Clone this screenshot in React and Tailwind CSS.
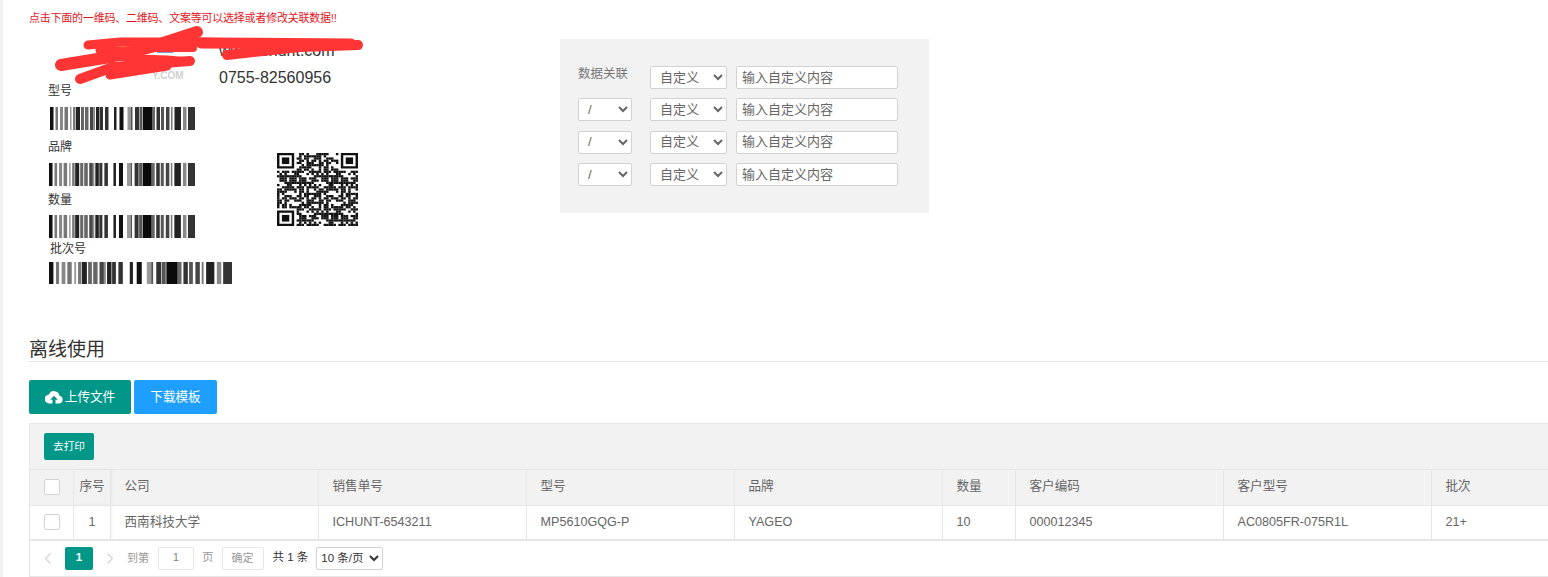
const FONT = { fontFamily: '"Liberation Sans", "Noto Sans CJK SC", sans-serif' }

// bar start, width, colour, read off the reference in px from the left of the code
const BARS = [
  [0, 3.5, '#111'], [5.5, 2.5, '#777'], [10, 3, '#888'], [14.5, 3.5, '#777'], [20, 1.5, '#999'], [23, 2.5, '#777'],
  [26, 4, '#222'], [31, 3, '#666'], [35, 3.5, '#666'], [40, 3.5, '#444'], [43.5, 1.5, '#888'], [46, 3.5, '#222'],
  [50, 3, '#333'], [55, 3.5, '#333'], [64, 2.5, '#222'], [69.5, 4, '#111'], [77.5, 3.5, '#999'], [81, 1.5, '#555'],
  [85, 4, '#333'], [89.5, 3, '#555'], [93, 9, '#0a0a0a'], [102, 3, '#666'], [106.5, 3.5, '#333'], [111, 3, '#555'],
  [116, 3.5, '#444'], [121, 1.5, '#777'], [124.5, 6.5, '#222'], [133, 3.5, '#888'], [138, 7, '#333'],
]

function Barcode({ className }) {
  return (
    <svg viewBox="0 0 145 23" preserveAspectRatio="none" className={`blur-[0.3px] ${className}`}>
      {BARS.map(([x, w, fill]) => (
        <rect key={x} x={x} y="0" width={w} height="23" fill={fill} />
      ))}
    </svg>
  )
}

// finder squares are fixed, the rest of the code is a filler pattern
function QrCode() {
  const size = 33
  const cells = []
  const inFinder = (c, r) => (c < 8 && r < 8) || (c > size - 9 && r < 8) || (c < 8 && r > size - 9)
  for (let r = 0; r < size; r++) {
    for (let c = 0; c < size; c++) {
      if (inFinder(c, r)) continue
      const v = (c * c * 7 + r * r * 13 + c * r * 5 + c * 3 + r * 11) % 17
      if (v % 2 === 0 || v === 7) cells.push(<rect key={c + '-' + r} x={c} y={r} width="1.02" height="1.02" />)
    }
  }
  const finder = (x, y) => (
    <g key={x + '-' + y}>
      <path d={`M${x} ${y}h7v7h-7z M${x + 1} ${y + 1}v5h5v-5z`} fillRule="evenodd" />
      <rect x={x + 2} y={y + 2} width="3" height="3" />
    </g>
  )
  return (
    <svg viewBox="0 0 33 33" preserveAspectRatio="none" className="w-[81px] h-[73px] blur-[0.35px]" fill="#111">
      {cells}
      {finder(0, 0)}
      {finder(26, 0)}
      {finder(0, 26)}
    </svg>
  )
}

function Scribble() {
  return (
    <svg viewBox="0 0 320 70" className="absolute left-[22px] top-[-15px] w-[320px] h-[70px]" fill="none" stroke="#ff3434" strokeLinecap="round" strokeLinejoin="round">
      <path d="M37 21 L69 18 L149 18 L199 19" strokeWidth="9" />
      <path d="M10 41 L59 33 L100 23 L146 8" strokeWidth="12" />
      <path d="M48 26 L85 27" strokeWidth="7" />
      <path d="M105 24 L142 24" strokeWidth="8" />
      <path d="M60 33 L116 35 L139 37" strokeWidth="7" />
      <path d="M29 55 L62 43 L139 37" strokeWidth="10" />
      <path d="M59 51 L116 42" strokeWidth="9" />
      <path d="M176 31 L249 23 L307 21" strokeWidth="10" />
      <path d="M150 19 L300 20" strokeWidth="11" />
    </svg>
  )
}

function Logo() {
  return (
    <div className="relative w-[190px] h-[43px]">
      <span className="absolute left-[88px] top-[7px] w-[14px] h-[5px] bg-[#f0a040]" />
      <span className="absolute left-[128px] top-[9px] w-[16px] h-[5px] bg-[#6f9fd0]" />
      <span className="absolute left-[95px] top-[26px] w-[24px] h-[5px] bg-[#f0a040]" />
      <span className="absolute left-[123px] top-[31px] text-[10px] leading-[12px] font-bold text-[#cfcfcf]">Y.COM</span>
    </div>
  )
}

function Label({ children, className = '' }) {
  return <p className={`h-[16px] text-[12px] leading-[18px] text-[#333] ${className}`}>{children}</p>
}

function PanelSelect({ options, className }) {
  return (
    <select className={`h-[23px] bg-white border border-[#d2d2d2] rounded-[2px] text-[13px] text-[#666] pl-[5px] pb-[1px] ${className}`}>
      {options.map(o => <option key={o}>{o}</option>)}
    </select>
  )
}

function Row({ first }) {
  return (
    <div className="flex items-center h-[23px]">
      {first
        ? <span className="w-[54px] text-[12.5px] text-[#777] -mt-[6px] whitespace-nowrap">数据关联</span>
        : <PanelSelect options={['/']} className="w-[54px]" />}
      <PanelSelect options={['自定义']} className="w-[77px] ml-[18px]" />
      <input placeholder="输入自定义内容" className="w-[162px] h-[23px] ml-[9px] px-[5px] pb-[1px] bg-white border border-[#d2d2d2] rounded-[2px] text-[13px] placeholder:text-[#666]" />
    </div>
  )
}

const COLS = [
  { title: '公司', width: 208, value: '西南科技大学' },
  { title: '销售单号', width: 208, value: 'ICHUNT-6543211' },
  { title: '型号', width: 208, value: 'MP5610GQG-P' },
  { title: '品牌', width: 208, value: 'YAGEO' },
  { title: '数量', width: 73, value: '10' },
  { title: '客户编码', width: 208, value: '000012345' },
  { title: '客户型号', width: 208, value: 'AC0805FR-075R1L' },
  { title: '批次', width: 117, value: '21+' },
]

function Checkbox() {
  return <span className="block w-[16px] h-[16px] mx-auto bg-white border border-[#d2d2d2] rounded-[2px]" />
}

export default function App() {
  return (
    <div className="relative w-[1548px] h-[577px] overflow-hidden bg-white border-l-[3px] border-[#f2f2f2] pl-[26px] text-[#666]" style={FONT}>
      <p className="pt-[11px] text-[11px] leading-[14px] tracking-[-0.02em] text-[#e4161c]">点击下面的一维码、二维码、文案等可以选择或者修改关联数据!!</p>

      {/* 标签预览 + 数据关联 */}
      <div className="flex mt-[14px] h-[298px]">
        <div className="relative w-[531px] shrink-0">
          <div className="flex h-[43px]">
            <Logo />
            <div className="text-[16px] leading-[27px] text-[#333] -mt-[2px]">
              <p>www.ichunt.com</p>
              <p>0755-82560956</p>
            </div>
          </div>
          <div className="flex">
            <div className="pl-[19px] w-[248px]">
              <Label>型号</Label>
              <Barcode className="block ml-[2px] mt-[9px] w-[145px] h-[23px]" />
              <Label className="mt-[8px]">品牌</Label>
              <Barcode className="block ml-[1px] mt-[9px] w-[146px] h-[23px]" />
              <Label className="mt-[5px]">数量</Label>
              <Barcode className="block ml-[1px] mt-[8px] w-[146px] h-[23px]" />
              <Label className="mt-[2px] ml-[2px]">批次号</Label>
              <Barcode className="block ml-[1px] mt-[6px] w-[183px] h-[22px]" />
            </div>
            <div className="mt-[71px]">
              <QrCode />
            </div>
          </div>
          <Scribble />
        </div>

        <div className="w-[369px] h-[174px] bg-[#f2f2f2] pt-[27px] pl-[18px] flex flex-col gap-[9.4px]">
          <Row first />
          <Row />
          <Row />
          <Row />
        </div>
      </div>

      <h2 className="pt-[1px] text-[19px] leading-[23px] text-[#333]">离线使用</h2>
      <div className="border-b border-[#e6e6e6]" />

      <div className="flex gap-[3px] mt-[18px]">
        <button className="flex items-center justify-center w-[102px] h-[34px] bg-[#009688] rounded-[2px] text-[12.6px] text-white">
          <svg viewBox="0 0 24 18" className="w-[18px] h-[14px] mr-[2px]" fill="#fff">
            <path d="M19.4 7.2A7.5 7.5 0 0 0 5.2 5.6 6 6 0 0 0 6 17.6h4v-5H7l5-5.4 5 5.4h-3v5h5a5.3 5.3 0 0 0 .4-10.4z" />
          </svg>
          上传文件
        </button>
        <button className="w-[83px] h-[34px] bg-[#1e9fff] rounded-[2px] text-[12.6px] text-white">下载模板</button>
      </div>

      {/* 表格 */}
      <div className="mt-[9px] border-t border-l border-[#e6e6e6]">
        <div className="h-[46px] bg-[#f2f2f2] pt-[9px] pl-[14px] border-b border-[#e6e6e6]">
          <button className="block w-[50px] h-[27px] bg-[#009688] rounded-[2px] text-[10.7px] text-white">去打印</button>
        </div>
        <table className="table-fixed w-[1518px] text-[12.6px] text-[#666] border-collapse">
          <colgroup>
            <col className="w-[43px]" />
            <col className="w-[37px]" />
            {COLS.map(c => <col key={c.title} style={{ width: c.width }} />)}
          </colgroup>
          <thead>
            <tr className="h-[35px] bg-[#f2f2f2] border-b border-[#e6e6e6]">
              <th className="border-r border-[#e6e6e6] font-normal pl-[1px]"><Checkbox /></th>
              <th className="border-r border-[#e6e6e6] font-normal pl-[1px] pb-[2px] shadow-[2px_0_3px_rgba(0,0,0,0.05)]">序号</th>
              {COLS.map(c => (
                <th key={c.title} className="border-r border-[#e6e6e6] font-normal text-left pl-[14px] pb-[2px]">{c.title}</th>
              ))}
            </tr>
          </thead>
          <tbody>
            <tr className="h-[35px] border-b-2 border-[#e6e6e6]">
              <td className="border-r border-[#e6e6e6] pl-[1px]"><Checkbox /></td>
              <td className="border-r border-[#e6e6e6] pl-[1px] text-center shadow-[2px_0_3px_rgba(0,0,0,0.05)]">1</td>
              {COLS.map(c => (
                <td key={c.title} className="border-r border-[#e6e6e6] pl-[14px]">{c.value}</td>
              ))}
            </tr>
          </tbody>
        </table>
        <div className="flex items-center h-[36px] pb-[1px] border-b border-[#e6e6e6] text-[11.5px]">
          <svg viewBox="0 0 10 16" className="w-[8px] h-[13px] ml-[14px]" fill="none" stroke="#c9c9c9" strokeWidth="1.3"><path d="M8 2 L2 8 L8 14" /></svg>
          <span className="flex items-center justify-center w-[28px] h-[23px] ml-[13px] bg-[#009688] rounded-[2px] text-white font-bold">1</span>
          <svg viewBox="0 0 10 16" className="w-[8px] h-[13px] ml-[13px]" fill="none" stroke="#c9c9c9" strokeWidth="1.3"><path d="M2 2 L8 8 L2 14" /></svg>
          <span className="ml-[13px] text-[#999] text-[11px]">到第</span>
          <span className="flex items-center justify-center w-[36px] h-[23px] ml-[9px] border border-[#e6e6e6] rounded-[2px] text-[#888]">1</span>
          <span className="ml-[8px] text-[#999]">页</span>
          <span className="flex items-center justify-center w-[42px] h-[23px] ml-[8px] border border-[#e6e6e6] rounded-[2px] text-[11px] text-[#999]">确定</span>
          <span className="ml-[9px] text-[#333]">共 1 条</span>
          <select className="w-[67px] h-[23px] ml-[8px] bg-white border border-[#d2d2d2] rounded-[2px] text-[11.5px] text-[#333]">
            <option>10 条/页</option>
          </select>
        </div>
      </div>
    </div>
  )
}
